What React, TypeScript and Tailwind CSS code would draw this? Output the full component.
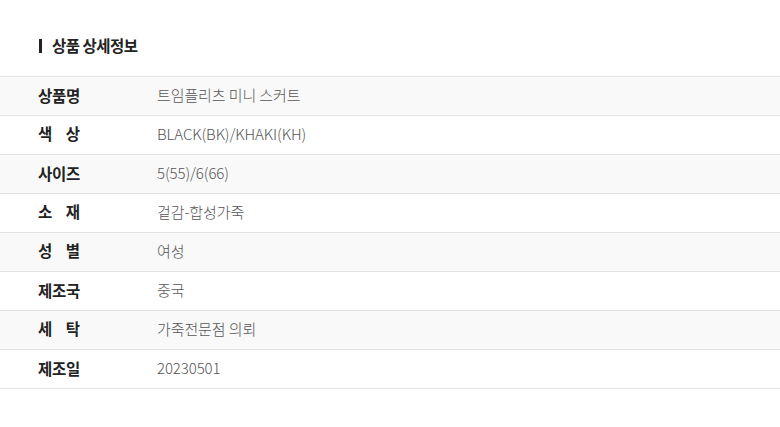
const rows: { label: string[]; value: string }[] = [
  { label: ["상품명"], value: "트임플리츠 미니 스커트" },
  { label: ["색", "상"], value: "BLACK(BK)/KHAKI(KH)" },
  { label: ["사이즈"], value: "5(55)/6(66)" },
  { label: ["소", "재"], value: "겉감-합성가죽" },
  { label: ["성", "별"], value: "여성" },
  { label: ["제조국"], value: "중국" },
  { label: ["세", "탁"], value: "가죽전문점 의뢰" },
  { label: ["제조일"], value: "20230501" },
]

export default function App() {
  return (
    <div
      className="w-[780px] h-[427px] bg-white text-[#222]"
      style={{ fontFamily: '"Noto Sans CJK KR", "Noto Sans", sans-serif' }}
    >
      <div className="flex items-center h-[76px] pl-[39px] pt-[16px]">
        <span className="w-[3px] h-[14px] bg-[#222] mr-[10px]" />
        <h2 className="text-[15.5px] font-bold tracking-[-0.5px]">상품 상세정보</h2>
      </div>
      <div className="border-t border-[#e3e3e3]">
        {rows.map((row, index) => (
          <div
            key={index}
            className={`flex items-center h-[39px] pb-[2px] border-b border-[#e3e3e3] ${index % 2 === 0 ? "bg-[#f9f9f9]" : "bg-white"}`}
          >
            <div className="w-[157px] pl-[38px] shrink-0">
              {row.label.length > 1 ? (
                <div className="flex justify-between w-[42px] text-[15.5px] font-bold">
                  {row.label.map((c) => (
                    <span key={c}>{c}</span>
                  ))}
                </div>
              ) : (
                <span className="text-[15.5px] font-bold tracking-[-0.3px]">{row.label[0]}</span>
              )}
            </div>
            <div className="text-[15px] font-light text-[#555] tracking-[-0.1px]">{row.value}</div>
          </div>
        ))}
      </div>
    </div>
  )
}
